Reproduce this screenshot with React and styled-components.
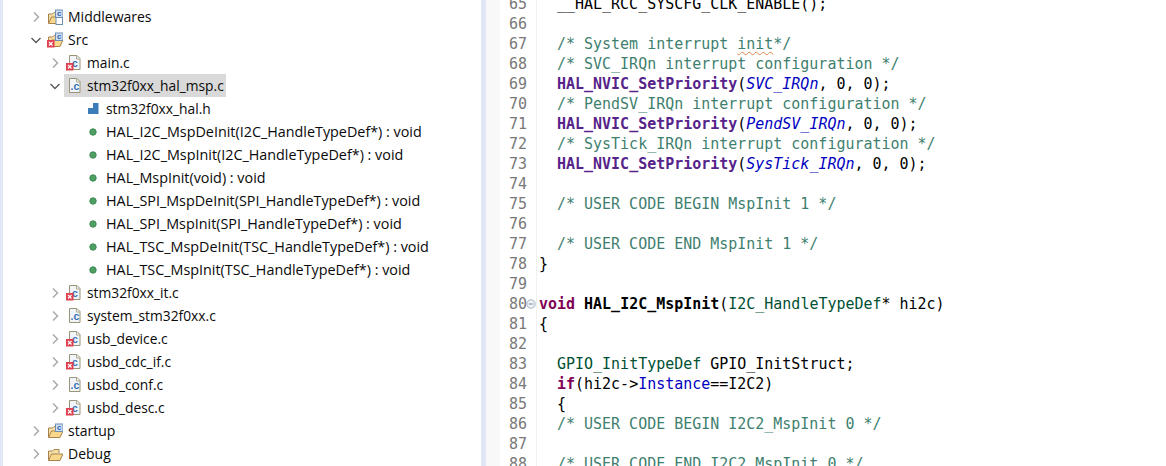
import React from "react";
import styled, { createGlobalStyle } from "styled-components";

const GlobalStyle = createGlobalStyle`
	html, body {
		margin: 0;
		padding: 0;
		background: #fff;
		overflow: hidden;
	}
`;

const TREE = [
	{ depth: 0, arrow: "right", icon: "folderLib", label: "Middlewares" },
	{ depth: 0, arrow: "down", icon: "folderSrcErr", label: "Src" },
	{ depth: 1, arrow: "right", icon: "fileErr", label: "main.c" },
	{ depth: 1, arrow: "down", icon: "file", label: "stm32f0xx_hal_msp.c", selected: true },
	{ depth: 2, icon: "header", label: "stm32f0xx_hal.h" },
	{ depth: 2, icon: "dot", label: "HAL_I2C_MspDeInit(I2C_HandleTypeDef*) : void" },
	{ depth: 2, icon: "dot", label: "HAL_I2C_MspInit(I2C_HandleTypeDef*) : void" },
	{ depth: 2, icon: "dot", label: "HAL_MspInit(void) : void" },
	{ depth: 2, icon: "dot", label: "HAL_SPI_MspDeInit(SPI_HandleTypeDef*) : void" },
	{ depth: 2, icon: "dot", label: "HAL_SPI_MspInit(SPI_HandleTypeDef*) : void" },
	{ depth: 2, icon: "dot", label: "HAL_TSC_MspDeInit(TSC_HandleTypeDef*) : void" },
	{ depth: 2, icon: "dot", label: "HAL_TSC_MspInit(TSC_HandleTypeDef*) : void" },
	{ depth: 1, arrow: "right", icon: "fileErr", label: "stm32f0xx_it.c" },
	{ depth: 1, arrow: "right", icon: "file", label: "system_stm32f0xx.c" },
	{ depth: 1, arrow: "right", icon: "fileErr", label: "usb_device.c" },
	{ depth: 1, arrow: "right", icon: "fileErr", label: "usbd_cdc_if.c" },
	{ depth: 1, arrow: "right", icon: "file", label: "usbd_conf.c" },
	{ depth: 1, arrow: "right", icon: "fileErr", label: "usbd_desc.c" },
	{ depth: 0, arrow: "right", icon: "folderSrc", label: "startup" },
	{ depth: 0, arrow: "right", icon: "folder", label: "Debug" },
];

// each code line is a list of [kind, text]
const CODE = [
	[65, [["plain", "  __HAL_RCC_SYSCFG_CLK_ENABLE();"]]],
	[66, []],
	[67, [["comment", "  /* System interrupt "], ["squiggle", "init"], ["comment", "*/"]]],
	[68, [["comment", "  /* SVC_IRQn interrupt configuration */"]]],
	[69, [["plain", "  "], ["fn", "HAL_NVIC_SetPriority"], ["plain", "("], ["enum", "SVC_IRQn"], ["plain", ", 0, 0);"]]],
	[70, [["comment", "  /* PendSV_IRQn interrupt configuration */"]]],
	[71, [["plain", "  "], ["fn", "HAL_NVIC_SetPriority"], ["plain", "("], ["enum", "PendSV_IRQn"], ["plain", ", 0, 0);"]]],
	[72, [["comment", "  /* SysTick_IRQn interrupt configuration */"]]],
	[73, [["plain", "  "], ["fn", "HAL_NVIC_SetPriority"], ["plain", "("], ["enum", "SysTick_IRQn"], ["plain", ", 0, 0);"]]],
	[74, []],
	[75, [["comment", "  /* USER CODE BEGIN MspInit 1 */"]]],
	[76, []],
	[77, [["comment", "  /* USER CODE END MspInit 1 */"]]],
	[78, [["plain", "}"]]],
	[79, []],
	[80, [["keyword", "void"], ["plain", " "], ["decl", "HAL_I2C_MspInit"], ["plain", "("], ["type", "I2C_HandleTypeDef"], ["plain", "* hi2c)"]], true],
	[81, [["plain", "{"]]],
	[82, []],
	[83, [["plain", "  "], ["type", "GPIO_InitTypeDef"], ["plain", " GPIO_InitStruct;"]]],
	[84, [["plain", "  "], ["keyword", "if"], ["plain", "(hi2c->"], ["field", "Instance"], ["plain", "==I2C2)"]]],
	[85, [["plain", "  {"]]],
	[86, [["comment", "  /* USER CODE BEGIN I2C2_MspInit 0 */"]]],
	[87, []],
	[88, [["comment", "  /* USER CODE END I2C2_MspInit 0 */"]]],
];

function ErrorBadge() {
	return (
		<g>
			<rect x="2" y="9" width="7.500" height="7.500" fill="#e0404f" />
			<path d="M4 11l3.500 3.500M7.500 11L4 14.500" stroke="#fff" strokeWidth="1.200" />
		</g>
	);
}

function CBadge() {
	return (
		<g>
			<rect x="10.500" y="2" width="7.500" height="7.500" fill="#cfe0f2" stroke="#6d8db5" />
			<text x="14.200" y="8.300" fontSize="8" fontWeight="700" fontFamily="Liberation Sans" fill="#2f63b0" textAnchor="middle">c</text>
		</g>
	);
}

function Folder() {
	return (
		<g>
			<path d="M3.500 15V6h4L9 4.500h5V8" fill="#f3dfa8" stroke="#a9814a" />
			<path d="M3.500 15.500L6.500 9h11.500l-3 6.500z" fill="#f8d98c" stroke="#a9814a" />
		</g>
	);
}

function FilePage({ error }) {
	return (
		<g>
			<path d="M5.500 1.500h7.500l3 3v11h-10.500z" fill="#f1f5fa" stroke="#9a9478" />
			<path d="M12.500 1.500v3.500h3.500" fill="none" stroke="#b0a98a" />
			<text x="11" y="12.500" fontSize="10.500" fontWeight="700" fontFamily="Liberation Sans" fill="#3a70b5" textAnchor="middle">{error ? "c" : ".c"}</text>
			{error && <ErrorBadge />}
		</g>
	);
}

function TreeIcon({ type }) {
	if (type === "dot") {
		return (
			<IconSvg viewBox="0 0 18 18">
				<circle cx="10" cy="9" r="3.200" fill="#4f9e63" stroke="#3d8a52" />
			</IconSvg>
		);
	}
	if (type === "header") {
		return (
			<IconSvg viewBox="0 0 18 18">
				<path d="M5 8h5V3h5.500v11H5z" fill="#3b7db8" />
			</IconSvg>
		);
	}
	if (type === "file" || type === "fileErr") {
		return (
			<IconSvg viewBox="0 0 18 18">
				<FilePage error={type === "fileErr"} />
			</IconSvg>
		);
	}
	return (
		<IconSvg viewBox="0 0 18 18">
			<Folder />
			{type !== "folder" && <CBadge />}
			{type === "folderLib" && <rect x="11" y="9.500" width="6.500" height="7" fill="#fff" stroke="#6d8db5" />}
			{type === "folderSrcErr" && <ErrorBadge />}
		</IconSvg>
	);
}

function Chevron({ dir }) {
	if (dir === "down") {
		return (
			<ChevronSvg viewBox="0 0 14 14">
				<path d="M2.500 5l4.500 4.500L11.500 5" fill="none" stroke="#595959" strokeWidth="1.400" />
			</ChevronSvg>
		);
	}
	return (
		<ChevronSvg viewBox="0 0 14 14">
			<path d="M5 2.500L9.500 7 5 11.500" fill="none" stroke="#a6a6a6" strokeWidth="1.400" />
		</ChevronSvg>
	);
}

function FoldMarker() {
	return (
		<FoldSvg viewBox="0 0 10 10">
			<circle cx="5" cy="5" r="4.200" fill="#eef1f5" stroke="#a8b3c0" />
			<path d="M2.800 5h4.400" stroke="#7f8c99" />
		</FoldSvg>
	);
}

// labels of outline members run a little wider than file names
function labelSize(icon) {
	if (icon === "dot") return 14.35;
	if (icon === "file" || icon === "fileErr" || icon === "header") return 13.8;
	return 14;
}

export default function App() {
	return (
		<Screen>
			<GlobalStyle />
			<LeftEdge />
			<TreePanel>
				{TREE.map((row) => (
					<TreeRow key={row.label} $depth={row.depth}>
						<Twistie>{row.arrow && <Chevron dir={row.arrow} />}</Twistie>
						<TreeItem $selected={row.selected}>
							<IconSlot>
								<TreeIcon type={row.icon} />
							</IconSlot>
							<TreeLabel $size={labelSize(row.icon)}>{row.label}</TreeLabel>
						</TreeItem>
					</TreeRow>
				))}
			</TreePanel>
			<Sash />
			<Gutter />
			<Editor>
				{CODE.map(([num, parts, folded]) => (
					<CodeLine key={num}>
						<LineNumber>
							{num}
							{folded && <FoldMarker />}
						</LineNumber>
						<CodeText>
							{parts.map(([kind, text], i) => (
								<Token key={i} $kind={kind}>
									{text}
								</Token>
							))}
						</CodeText>
					</CodeLine>
				))}
			</Editor>
		</Screen>
	);
}

const TOKEN_STYLES = {
	plain: "color: #000;",
	comment: "color: #3f7f6f;",
	squiggle: "color: #3f7f6f; text-decoration: underline wavy #e2874f 1px; text-underline-offset: 2px;",
	fn: "color: #56238a; font-weight: 700;",
	enum: "color: #0000c0; font-style: italic;",
	keyword: "color: #7f0055; font-weight: 700;",
	decl: "color: #000; font-weight: 700;",
	type: "color: #005032;",
	field: "color: #0000c0;",
};

const Screen = styled.div`
	display: flex;
	width: 1166px;
	height: 466px;
	overflow: hidden;
	background: #fff;
`;
const LeftEdge = styled.div`
	width: 3px;
	flex: none;
	background: #e1e7f7;
`;
const TreePanel = styled.div`
	width: 478px;
	flex: none;
	padding-top: 5px;
	box-sizing: border-box;
	overflow: hidden;
`;
const TreeRow = styled.div`
	display: flex;
	align-items: center;
	height: 23px;
	padding-left: ${(p) => 26 + p.$depth * 19}px;
`;
const Twistie = styled.span`
	display: flex;
	align-items: center;
	justify-content: center;
	width: 14px;
	margin-right: 2px;
	flex: none;
`;
const ChevronSvg = styled.svg`
	display: block;
	width: 14px;
	height: 14px;
`;
const TreeItem = styled.div`
	display: flex;
	align-items: center;
	height: 23px;
	padding-right: 2px;
	background: ${(p) => (p.$selected ? "#d9d9d9" : "transparent")};
`;
const IconSlot = styled.span`
	display: flex;
	align-items: center;
	width: 23px;
	flex: none;
`;
const IconSvg = styled.svg`
	display: block;
	width: 18px;
	height: 18px;
`;
const TreeLabel = styled.span`
	font-family: "Open Sans", "Noto Sans", sans-serif;
	font-size: ${(p) => p.$size}px;
	color: #0a0a0a;
	white-space: nowrap;
`;
const Sash = styled.div`
	width: 5px;
	flex: none;
	background: #e1e7f7;
`;
const Gutter = styled.div`
	width: 14px;
	flex: none;
	background: #f8f8f8;
`;
const Editor = styled.div`
	flex: 1;
	margin-top: -6px;
	font-family: "DejaVu Sans Mono", monospace;
	font-size: 14.97px;
`;
const CodeLine = styled.div`
	display: flex;
	height: 20px;
	line-height: 20px;
`;
const LineNumber = styled.div`
	position: relative;
	width: 27px;
	flex: none;
	padding-right: 9px;
	margin-right: 2px;
	text-align: right;
	color: #787878;
	border-right: 1px solid #f0f0f0;
`;
const FoldSvg = styled.svg`
	position: absolute;
	right: 0;
	top: 5px;
	width: 10px;
	height: 10px;
`;
const CodeText = styled.pre`
	margin: 0;
	font: inherit;
	white-space: pre;
`;
const Token = styled.span`
	${(p) => TOKEN_STYLES[p.$kind]}
`;
